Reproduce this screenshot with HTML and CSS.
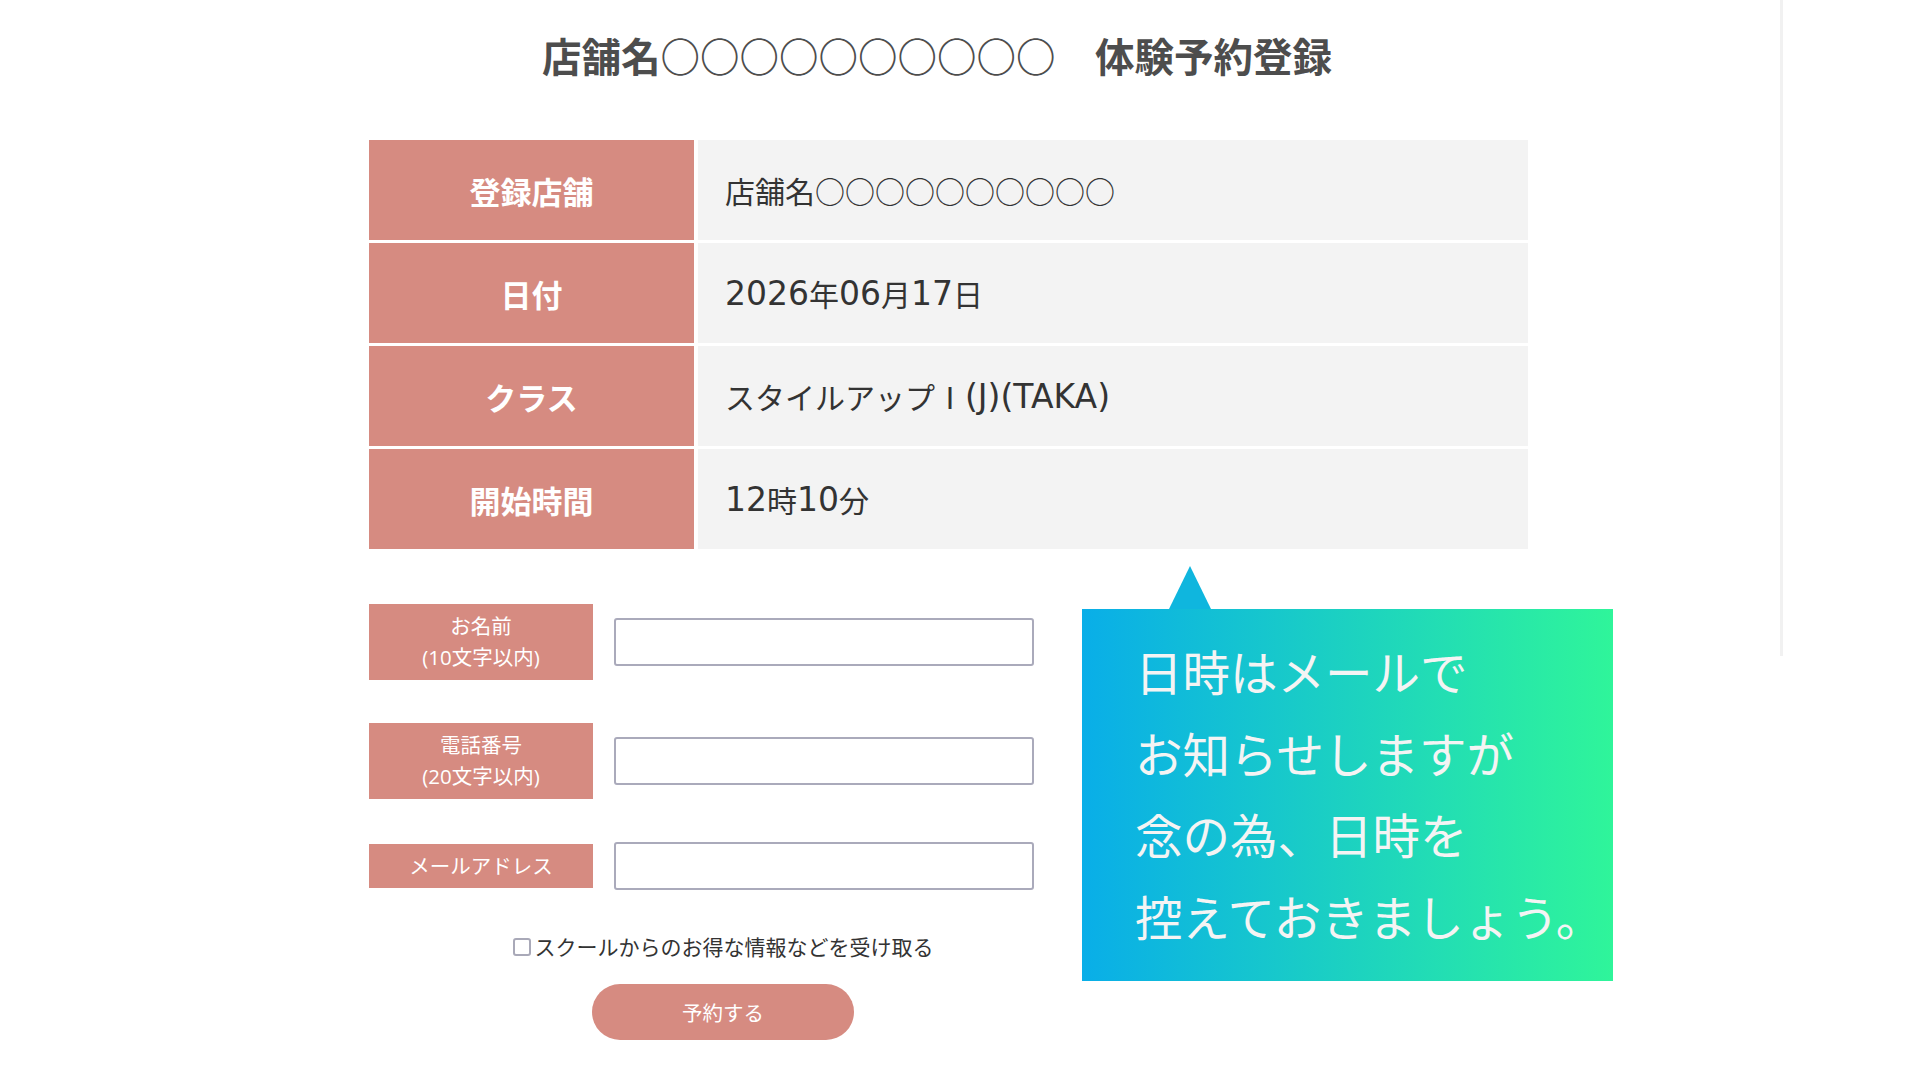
FILE: index.html
```html
<!DOCTYPE html>
<html lang="ja">
<head>
<meta charset="utf-8">
<title>体験予約登録</title>
<link rel="stylesheet" href="styles.css">
</head>
<body>
<div class="edge-line"></div>
<main class="page">
  <h1 class="title">店舗名○○○○○○○○○○　体験予約登録</h1>

  <div class="info">
    <div class="info-head">登録店舗</div>
    <div class="info-val">店舗名○○○○○○○○○○</div>
    <div class="info-head">日付</div>
    <div class="info-val"><span class="lat">2026</span>年<span class="lat">06</span>月<span class="lat">17</span>日</div>
    <div class="info-head">クラス</div>
    <div class="info-val">スタイルアップⅠ<span class="lat">(J)(TAKA)</span></div>
    <div class="info-head">開始時間</div>
    <div class="info-val"><span class="lat">12</span>時<span class="lat">10</span>分</div>
  </div>

  <div class="lower">
    <form class="form">
      <div class="row">
        <label class="lbl tall">お名前<br>(10文字以内)</label>
        <input class="field" type="text">
      </div>
      <div class="row">
        <label class="lbl tall">電話番号<br>(20文字以内)</label>
        <input class="field" type="text">
      </div>
      <div class="row">
        <label class="lbl">メールアドレス</label>
        <input class="field" type="text">
      </div>
      <label class="check"><input type="checkbox" class="box">スクールからのお得な情報などを受け取る</label>
      <button type="button" class="submit">予約する</button>
    </form>

    <div class="callout">
      <p>日時はメールで<br>お知らせしますが<br>念の為、日時を<br>控えておきましょう。</p>
    </div>
  </div>
</main>
</body>
</html>
```
FILE: styles.css
```css
html, body {
  margin: 0;
  padding: 0;
  background: #fff;
}
body {
  font-family: "Open Sans", "Noto Sans CJK JP", sans-serif;
  color: #333;
}
.edge-line {
  position: absolute;
  left: 1780px;
  top: 0;
  width: 3px;
  height: 656px;
  background: #f1f1f1;
}
.page {
  width: 1159px;
  margin-left: calc(50% - 595.5px);
  padding-top: 27px;
}
.title {
  margin: 0;
  font-family: "Noto Sans CJK JP", sans-serif;
  font-size: 39.5px;
  line-height: 56px;
  font-weight: 700;
  color: #4d4d4d;
  text-align: center;
  padding-right: 23px;
  white-space: nowrap;
}
.info {
  margin-top: 57px;
  display: grid;
  grid-template-columns: 325px 830px;
  grid-auto-rows: 100px;
  column-gap: 4px;
  row-gap: 3px;
}
.info-head {
  background: #d68b81;
  color: #fff;
  font-family: "Noto Sans CJK JP", sans-serif;
  font-weight: 700;
  font-size: 31px;
  display: flex;
  align-items: center;
  justify-content: center;
}
.info-val {
  background: #f3f3f3;
  color: #333;
  font-family: "Noto Sans CJK JP", sans-serif;
  font-size: 30px;
  display: flex;
  align-items: center;
  padding-left: 27px;
  white-space: pre;
}
.info-val .lat {
  font-family: "DejaVu Sans", sans-serif;
  font-size: 33px;
}
.lower {
  margin-top: 55px;
  display: flex;
  align-items: flex-start;
  gap: 5px;
}
.form {
  width: 708px;
  flex: none;
  display: flex;
  flex-direction: column;
  align-items: flex-start;
}
.row {
  display: flex;
  align-items: center;
  gap: 21px;
  margin-bottom: 43px;
}
.row:nth-child(3) {
  margin-bottom: 0;
}
.lbl {
  width: 224px;
  height: 44px;
  background: #d68b81;
  color: #fff;
  font-size: 20.5px;
  line-height: 31px;
  display: flex;
  align-items: center;
  justify-content: center;
  text-align: center;
}
.lbl.tall {
  height: 76px;
}
.field {
  box-sizing: border-box;
  width: 420px;
  height: 48px;
  border: 2px solid #aaaabb;
  border-radius: 3px;
  background: #fff;
  margin: 0;
}
.check {
  align-self: center;
  margin-top: 42px;
  font-size: 21px;
  line-height: 30px;
  color: #333;
  display: flex;
  align-items: center;
}
.box {
  appearance: none;
  -webkit-appearance: none;
  width: 18px;
  height: 18px;
  margin: 0 4px 0 0;
  border: 2px solid #a9a9b8;
  border-radius: 3px;
  background: #fff;
}
.submit {
  align-self: center;
  margin-top: 22px;
  width: 262px;
  height: 56px;
  border: none;
  border-radius: 28px;
  background: #d68b81;
  color: #fff;
  font-family: inherit;
  font-size: 20.5px;
}
.callout {
  position: relative;
  flex: none;
  margin-top: 5px;
  width: 531px;
  box-sizing: border-box;
  padding: 23px 0 22px 53px;
  background: linear-gradient(90deg, #09aee8 0%, #2ff59a 100%);
  color: #f4f4f4;
}
.callout::before {
  content: "";
  position: absolute;
  left: 87px;
  top: -43px;
  width: 42px;
  height: 43px;
  background: #0fb6de;
  clip-path: polygon(50% 0, 100% 100%, 0 100%);
}
.callout p {
  margin: 0;
  font-size: 47.5px;
  line-height: 81.7px;
  white-space: nowrap;
}
```
